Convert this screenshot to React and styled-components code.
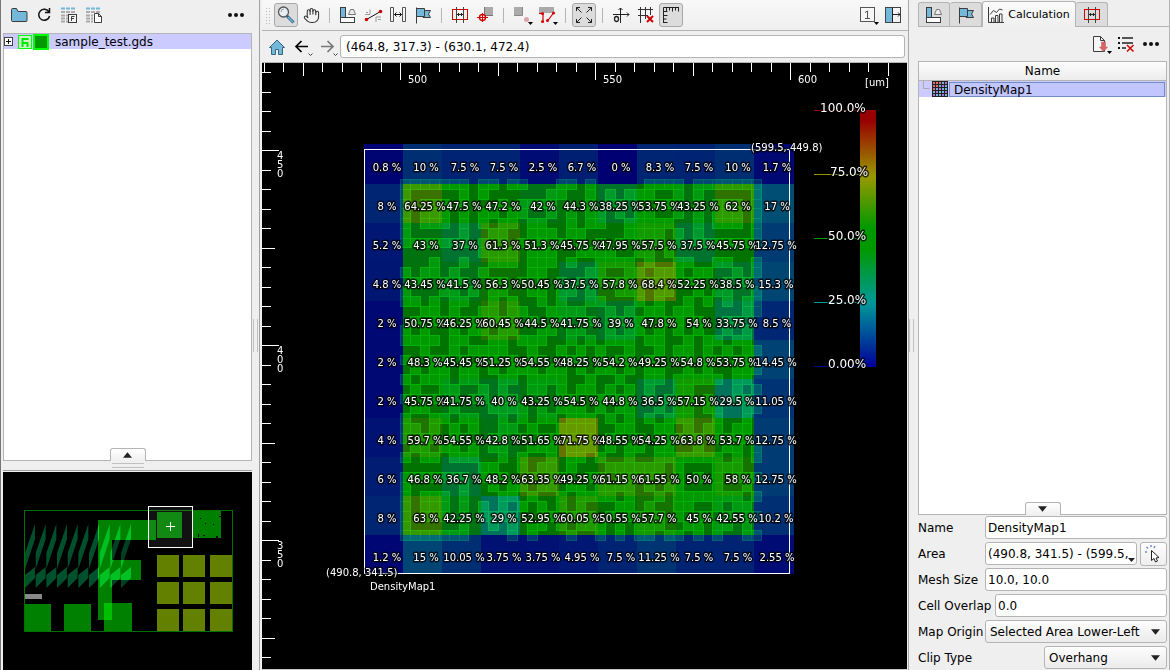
import React, { useState } from "react";
import styled, { createGlobalStyle } from "styled-components";
import { Hand } from "lucide-react";

const GlobalStyle = createGlobalStyle`
  * {
    box-sizing: border-box;
  }
  body {
    margin: 0;
    background: #efefef;
    color: #000;
    font-family: "DejaVu Sans", Verdana, sans-serif;
    font-size: 12px;
  }
  button, input, select {
    font: inherit;
    color: inherit;
  }
`;

const line = "#b4b4b4";
const ink = "#3c3c3c";
const blue = "#73b7d9";
const red = "#d40000";

const Shell = styled.div`
  display: flex;
  height: 100vh;
  border-left: 1px solid #777;
  border-right: 1px solid ${line};
  overflow: hidden;
`;

const LeftPane = styled.aside`
  display: flex;
  flex-direction: column;
  width: 251px;
  flex: none;
  padding-left: 2px;
`;

const CenterPane = styled.main`
  display: flex;
  flex-direction: column;
  flex: 1;
  min-width: 0;
  padding-left: 2px;
  border-left: 1px solid #a0a0a0;
  border-right: 1px solid #a8a8a8;
`;

const RightPane = styled.aside`
  display: flex;
  flex-direction: column;
  width: 255px;
  flex: none;
  padding: 2px 2px 0 4px;
`;

const Splitter = styled.div`
  display: flex;
  align-items: center;
  justify-content: center;
  flex: none;
  width: ${(p) => (p.$row ? "auto" : p.$width || "5px")};
  height: ${(p) => (p.$row ? "9px" : "auto")};

  &::after {
    content: "";
    width: ${(p) => (p.$row ? "32px" : "3px")};
    height: ${(p) => (p.$row ? "3px" : "33px")};
    border: solid #c0c0c0;
    border-width: ${(p) => (p.$row ? "1px 0" : "0 1px")};
  }
`;

const Toolbar = styled.div`
  display: flex;
  align-items: center;
  gap: 1px;
  flex: none;
  height: ${(p) => p.$height || "31px"};
  padding: ${(p) => p.$pad || "0 4px"};
  background: ${(p) => (p.$shaded ? "linear-gradient(#f8f8f8, #efefef)" : "none")};
  border-bottom: ${(p) => (p.$shaded ? `1px solid ${line}` : "none")};
`;

const ToolButton = styled.button`
  display: flex;
  align-items: center;
  justify-content: center;
  width: 24px;
  height: 24px;
  padding: 0;
  border: 1px solid ${(p) => (p.$on ? "#a8a8a8" : "transparent")};
  border-radius: 3px;
  background: ${(p) => (p.$on ? "#dcdcdc" : "none")};

  svg {
    flex: none;
  }
`;

const Separator = styled.span`
  width: 11px;
  height: 15px;
  background: linear-gradient(${line}, ${line}) center / 1px 100% no-repeat;
`;

const Grip = styled.span`
  width: 5px;
  height: 17px;
  margin-right: 3px;
  background: radial-gradient(circle, #bbb 1px, transparent 1px) 0 0 / 3px 3px;
`;

const Spacer = styled.span`
  flex: 1;
`;

const TreeBox = styled.section`
  position: relative;
  flex: 1;
  min-height: 0;
  background: #fff;
  border: 1px solid ${line};
`;

const FileRow = styled.div`
  display: flex;
  align-items: center;
  height: 15px;
  background: #cbcbff;

  span {
    line-height: 16px;
    margin-left: 5px;
    padding-top: 1px;
  }
`;

const CollapseTab = styled.button`
  position: absolute;
  bottom: -1px;
  left: 50%;
  width: 36px;
  height: 13px;
  padding: 0;
  transform: translateX(-50%);
  display: flex;
  align-items: center;
  justify-content: center;
  border: 1px solid ${line};
  border-bottom: none;
  border-radius: 3px 3px 0 0;
  background: linear-gradient(#fff, #efefef);
`;

const MiniMap = styled.div`
  flex: none;
  height: 200px;
  border-top: 1px solid #a0a0a0;
  padding-top: 1px;

  svg {
    display: block;
    width: 100%;
    height: 198px;
    background: #000;
    isolation: isolate;
  }
`;

const AddressBar = styled.form`
  display: flex;
  align-items: center;
  gap: 1px;
  flex: none;
  height: 31px;
  padding: 0 3px;
`;

const Field = styled.input`
  flex: 1;
  min-width: 0;
  width: 100%;
  height: 23px;
  padding: 0 2px;
  border: 1px solid ${line};
  border-radius: 3px;
  background: #fff;
  outline: none;
`;

const AddressField = styled(Field)`
  padding: 0 5px;
`;

const AreaField = styled(Field)`
  padding-right: 8px;
`;

const LayoutCanvas = styled.div`
  flex: 1;
  min-height: 0;
  border-top: 1px solid ${line};
  border-bottom: 1px solid #cfc8c8;
  margin-right: 1px;

  svg {
    display: block;
    width: 100%;
    height: 100%;
    background: #000;
    isolation: isolate;
  }
  text {
    fill: #fff;
    font-size: 10px;
  }
`;

const Lighten = styled.g`
  mix-blend-mode: plus-lighter;
`;

const HaloText = styled.g`
  text {
    paint-order: stroke;
    stroke: rgba(0, 0, 0, 0.75);
    stroke-width: 3px;
    stroke-linejoin: round;
    font-size: ${(p) => p.$size || "10px"};
  }
`;

const Tabs = styled.div`
  display: flex;
  align-items: flex-end;
  flex: none;
  height: 25px;
  margin-right: -2px;
  border-bottom: 1px solid ${line};
`;

const Tab = styled.button`
  display: flex;
  align-items: center;
  justify-content: center;
  gap: 4px;
  width: ${(p) => (p.$active ? "94px" : "32px")};
  height: ${(p) => (p.$active ? "26px" : "24px")};
  margin-bottom: ${(p) => (p.$active ? "-1px" : "0")};
  padding: 0;
  border: 1px solid ${line};
  border-bottom: none;
  border-left-width: ${(p) => (p.$first || p.$active ? "1px" : "0")};
  border-radius: 3px 3px 0 0;
  background: ${(p) => (p.$active ? "linear-gradient(#fcfcfc, #efefef)" : "#dcdcdc")};
  font-size: 11px;

  svg {
    flex: none;
  }
`;

const ListHeader = styled.div`
  height: 19px;
  line-height: 19px;
  text-align: center;
  background: linear-gradient(#fdfdfd, #ececec);
  border-bottom: 1px solid ${line};
`;

const ListRow = styled.div`
  display: flex;
  align-items: center;
  height: 16px;
  background: #cbcbff;

  span {
    flex: 1;
    height: 15px;
    line-height: 15px;
    margin-left: 1px;
    margin-right: 1px;
    padding-left: 4px;
    border: 1px solid #6f8fc0;
    background: #c1c6ff;
  }
`;

const Form = styled.form`
  display: grid;
  gap: 3px;
  flex: none;
  padding: 1px 0;
`;

const FormRow = styled.div`
  display: flex;
  align-items: center;
  gap: 3px;
  height: 23px;

  label {
    flex: none;
    width: ${(p) => p.$label || "64px"};
    white-space: nowrap;
  }
`;

const Combo = styled.div`
  position: relative;
  display: flex;
  flex: 1;
  min-width: 0;

  svg {
    position: absolute;
    right: 2px;
    bottom: 2px;
  }
`;

const PickButton = styled.button`
  display: flex;
  align-items: center;
  justify-content: center;
  width: 27px;
  height: 24px;
  padding: 0;
  border: 1px solid ${line};
  border-radius: 3px;
  background: linear-gradient(#fdfdfd, #efefef);
`;

const SelectWrap = styled.div`
  position: relative;
  flex: 1;

  svg {
    position: absolute;
    right: 7px;
    top: 9px;
    pointer-events: none;
  }
`;

const Select = styled.select`
  appearance: none;
  width: 100%;
  height: 23px;
  padding: 0 4px;
  border: 1px solid ${line};
  border-radius: 3px;
  background: linear-gradient(#fdfdfd, #ebebeb);
  outline: none;
`;

/* ---------- icons, drawn on a 24px button grid ---------- */

const Icon = ({ children, size = 24 }) => (
  <svg width={size} height={24} viewBox={`0 0 ${size} 24`} fill="none" stroke={ink} aria-hidden="true">
    {children}
  </svg>
);

const Caret = ({ x, y }) => <path d={`M${x} ${y}h5l-2.5 3z`} fill="#000" stroke="none" />;

const FolderIcon = () => (
  <Icon>
    <path d="M4.5 6.5q0-1 1-1h4l1.500 3h8q1 0 1 1v8q0 1-1 1h-13.500q-1 0-1-1z" fill={blue} />
  </Icon>
);

const ReloadIcon = () => (
  <Icon>
    <path d="M17 9a5.500 5.500 0 1 0 .6 4M17.500 5v4.500h-4.500" stroke="#111" strokeWidth="1.5" />
  </Icon>
);

const TableIcon = ({ kind }) => (
  <Icon>
    <path d="M4 5.500h15" stroke={blue} strokeWidth="2" strokeDasharray="4 1" />
    <path d="M4 9h15" stroke="#aaa" strokeWidth="2" strokeDasharray="4 1" />
    <path d="M4 12.500h7M4 15.500h7M4 18.500h7" stroke="#aaa" strokeWidth="2" strokeDasharray="4 1" />
    {kind === "F" ? (
      <g>
        <rect x="11.5" y="11.500" width="8" height="8" fill="#f3f3f3" />
        <path d="M14.500 18v-4.500h3M14.500 15.500h2.500" />
      </g>
    ) : (
      <path d="M12.500 10.500h4l3 3v6h-7zM16.500 10.500v3h3" fill="#fff" />
    )}
  </Icon>
);

const DotsIcon = () => (
  <Icon>
    <g fill="#111" stroke="none">
      <circle cx="6" cy="12" r="2" />
      <circle cx="12" cy="12" r="2" />
      <circle cx="18" cy="12" r="2" />
    </g>
  </Icon>
);

const SearchIcon = () => (
  <Icon size={22}>
    <path d="M12 13l6.500 6.500" stroke="#2c5f80" strokeWidth="3" />
    <path d="M13 14l5 5" stroke={blue} strokeWidth="1.5" />
    <circle cx="8.500" cy="9" r="5" fill="#e6eef2" stroke="#555" strokeWidth="1.3" />
    <path d="M6 9a3 3 0 0 1 3-3" stroke="#999" />
  </Icon>
);

const ShapesIcon = () => (
  <Icon>
    <rect x="4.500" y="4.500" width="5" height="10" fill={blue} />
    <rect x="4.500" y="14.500" width="14" height="5" fill="#fff" />
    <path d="M12.500 11.500l2-5h3l2 5z" stroke="#777" fill="#eee" />
  </Icon>
);

const PathIcon = () => (
  <Icon>
    <path d="M4 11.500h5v-5M15 19v-5h5M5 9.500h2M17 16.500h3" stroke="#999" />
    <path d="M5.500 16.500l14-8" stroke="#111" />
    <circle cx="5.500" cy="16.500" r="1.800" fill={red} stroke="none" />
    <circle cx="19.500" cy="8.500" r="1.800" fill={red} stroke="none" />
  </Icon>
);

const DistanceIcon = () => (
  <Icon>
    <path d="M4.500 4.500h3v14h-3zM16.500 4.500h3v14h-3z" stroke="#555" />
    <path d="M8.500 11.500h7M10.500 9.500l-2 2 2 2M13.500 9.500l2 2-2 2" stroke="#111" />
  </Icon>
);

const FlagIcon = () => (
  <Icon>
    <path d="M12 7.500h7.500l-2 3.500 2 3.500h-7.500z" fill={blue} />
    <path d="M5.500 5.500h8v8h-8z" fill={blue} />
    <path d="M5.500 4.500v16" />
  </Icon>
);

const RedRulerIcon = () => (
  <Icon>
    <rect x="4.500" y="6.500" width="15" height="10" stroke={red} />
    <path d="M8.500 4v16M15.500 4v16" stroke="#444" />
    <path d="M9 11.500h6M11 10l-1.500 1.500 1.500 1.500M13 10l1.500 1.500-1.500 1.500" stroke="#222" />
  </Icon>
);

const SnapIcon = () => (
  <Icon>
    <path d="M12 4h8v8h-8z" fill="#aaa" stroke="none" />
    <path d="M11.500 4v9M12 12.500h8" stroke="#777" />
    <circle cx="9.500" cy="14.500" r="3" stroke={red} fill="#fff" strokeWidth="1.4" />
    <path d="M4 14.500h11M9.500 10v9" stroke={red} />
  </Icon>
);

const PointIcon = () => (
  <Icon>
    <path d="M4 4h8v8h-8z" fill="#aaa" stroke="none" />
    <path d="M12.500 4v8.500H4" stroke="#888" />
    <circle cx="16.500" cy="16.500" r="2.500" fill="#d8a6a6" stroke="none" />
    <Caret x={18} y={19} />
  </Icon>
);

const VertexIcon = () => (
  <Icon>
    <path d="M4 4h15v6H4z" fill="#aaa" stroke="none" />
    <path d="M4 10.500h4v9M12.500 18l6-8" stroke={red} strokeWidth="1.200" />
    <g fill={red} stroke="none">
      <circle cx="7.500" cy="10.500" r="1.500" />
      <circle cx="7.500" cy="18.500" r="1.500" />
      <circle cx="12.500" cy="17.500" r="1.500" />
      <circle cx="18.500" cy="10" r="1.500" />
    </g>
    <Caret x={18} y={19} />
  </Icon>
);

const ExpandIcon = () => (
  <Icon size={22}>
    <path
      d="M8.500 9.500l-5-5M3.500 8v-3.500H7M13.500 9.500l5-5M15 4.500h3.500V8M8.500 14.500l-5 5M3.500 16v3.500H7M13.500 14.500l5 5M15 19.500h3.500V16"
      stroke="#222"
    />
  </Icon>
);

const OriginIcon = () => (
  <Icon>
    <path d="M4 11.500h16M11.500 20V5M18 9.500l2 2-2 2M9.500 7l2-2 2 2" stroke="#222" />
    <ellipse cx="7.500" cy="16" rx="2" ry="2.500" stroke="#222" strokeWidth="1.300" />
  </Icon>
);

const GridOffIcon = () => (
  <Icon>
    <path d="M4 6.500h15M4 12.500h10M6.500 4v16M11.500 4v12M16.500 4v8" stroke="#333" />
    <path d="M13 13l6 6M19 13l-6 6" stroke={red} strokeWidth="2" />
  </Icon>
);

const ScaleIcon = () => (
  <Icon size={22}>
    <path d="M3.500 20V4.500H19M6.500 4.500v4M9.500 4.500v3M12.500 4.500v4M15.500 4.500v3M18.500 4.500v4M3.500 8.500h4M3.500 12.500h4M3.500 16h3M3.500 19.500h4" stroke="#222" />
  </Icon>
);

const PageIcon = () => (
  <Icon>
    <rect x="4.500" y="4.500" width="14" height="14" fill="#f6f6f6" stroke="#555" />
    <path d="M9 9.500l2.500-1.500v7.500M9 15.500h5" stroke="#555" />
    <Caret x={18} y={19} />
  </Icon>
);

const SidePanelIcon = () => (
  <Icon>
    <rect x="4.500" y="4.500" width="15" height="15" stroke="#444" />
    <path d="M5 5h6v14H5z" fill={blue} stroke="none" />
    <path d="M11.500 4.500v15M12 11.500h7M17 9.500l2 2-2 2" stroke="#222" />
  </Icon>
);

const HomeIcon = () => (
  <Icon>
    <path d="M4.500 12.500l7.500-7.500 7.500 7.500h-2v7h-4v-5h-3v5h-4v-7z" fill={blue} stroke="#34647e" />
  </Icon>
);

const ArrowIcon = ({ back }) => (
  <Icon>
    {back ? (
      <path d="M18 11.500H6M11.500 6l-5.500 5.500 5.500 5.500" stroke="#000" strokeWidth="1.700" />
    ) : (
      <path d="M6 11.500h12M12.500 6l5.500 5.500-5.500 5.500" stroke="#777" strokeWidth="1.700" />
    )}
    <path d="M18.500 18.500l2 2 2-2" stroke="#444" />
  </Icon>
);

const ChartIcon = () => (
  <svg width="16" height="16" viewBox="0 0 16 16" fill="none" stroke={ink} aria-hidden="true">
    <path d="M.5 0v15.500H16M3.500 15v-4h2.500v4M7.500 15V8.500H10V15M11.500 15v-8H14v8M2 7.500l3.500-4 3 2 3-3.500 3 1" />
  </svg>
);

const ExportIcon = () => (
  <Icon>
    <path d="M4.500 4.500h7l4 4v11h-11zM11.500 4.500v4h4" fill="#f6f6f6" />
    <path d="M12.500 10h4v5h2l-4 4.500-4-4.500h2z" fill="#d96666" stroke="#b55" strokeWidth=".5" />
    <Caret x={18} y={19} />
  </Icon>
);

const ListOffIcon = () => (
  <Icon>
    <path d="M8 6h11M8 11h11M8 16h4" stroke="#222" strokeWidth="1.500" />
    <path d="M4 6h2M4 11h2M4 16h2" stroke="#111" strokeWidth="2" />
    <path d="M13 13l6.500 6.500M19.500 13l-6.500 6.500" stroke={red} strokeWidth="1.500" />
  </Icon>
);

const PickIcon = () => (
  <svg width="17" height="18" viewBox="0 0 17 18" fill="none" aria-hidden="true">
    <path d="M2 7H0M3 3.500L1.500 2M6 2V0M9 3l1-2" stroke="#6d8cc8" strokeWidth="1.500" />
    <path d="M6.500 5.500v10l2.500-2 1.500 3.500 2-1-1.500-3 3-.5z" fill="#fff" stroke="#222" />
  </svg>
);

const heatDots = ["#e07070", "#73b7d9", "#b070e0"];

const MapIcon = () => (
  <svg width="16" height="16" viewBox="0 0 16 16" aria-hidden="true">
    <rect width="16" height="16" fill="#222" />
    {Array.from({ length: 25 }, (_, i) => {
      const col = i % 5;
      const row = Math.floor(i / 5);
      const color = col + row < 3 ? heatDots[0] : (col + row) % 3 === 1 ? heatDots[2] : heatDots[1];
      return <rect key={i} x={1 + col * 3} y={1 + row * 3} width="2" height="2" fill={color} />;
    })}
  </svg>
);

const Triangle = ({ up, width = 9 }) => (
  <svg width={width} height="6" viewBox="0 0 10 6" aria-hidden="true">
    <path d={up ? "M0 6h10L5 0z" : "M0 0h10L5 6z"} fill="#222" />
  </svg>
);

/* ---------- density map ---------- */

const density = [
  [0.8, 10, 7.5, 7.5, 2.5, 6.7, 0, 8.3, 7.5, 10, 1.7],
  [8, 64.25, 47.5, 47.2, 42, 44.3, 38.25, 53.75, 43.25, 62, 17],
  [5.2, 43, 37, 61.3, 51.3, 45.75, 47.95, 57.5, 37.5, 45.75, 12.75],
  [4.8, 43.45, 41.5, 56.3, 50.45, 37.5, 57.8, 68.4, 52.25, 38.5, 15.3],
  [2, 50.75, 46.25, 60.45, 44.5, 41.75, 39, 47.8, 54, 33.75, 8.5],
  [2, 48.3, 45.45, 51.25, 54.55, 48.25, 54.2, 49.25, 54.8, 53.75, 14.45],
  [2, 45.75, 41.75, 40, 43.25, 54.5, 44.8, 36.5, 57.15, 29.5, 11.05],
  [4, 59.7, 54.55, 42.8, 51.65, 71.75, 48.55, 54.25, 63.8, 53.7, 12.75],
  [6, 46.8, 36.7, 48.2, 63.35, 49.25, 61.15, 61.55, 50, 58, 12.75],
  [8, 63, 42.25, 29, 52.95, 60.05, 50.55, 57.7, 45, 42.55, 10.2],
  [1.2, 15, 10.05, 3.75, 3.75, 4.95, 7.5, 11.25, 7.5, 7.5, 2.55],
];

// layout cells under the map, one string per row
const pattern = [
  "#######.##.##...##.#.....####.#######",
  "#.....#.#......##..#.#.###..#.#.....#",
  "#.###.#...#.####...#.##.#.###.#.###.#",
  "#.###.#.##.##..#.#.##.#.##..#.#.###.#",
  "#.###.#.#.##.##..#.##..#####..#.###.#",
  "#.....#..##..###.##....####.#.#.....#",
  "#######.#.#.#.#.#.#.#.#.#.#.#.#######",
  "........####.###..####..##.#.........",
  "...#..#..###.###.#..####.#..##..##..#",
  "#.##.#..#....##....##..##.###.##..#.#",
  ".##.###..##.#.#.#.#.####.##.###..#.#.",
  "#...##.#.##..##.##.#..###.##..#.##..#",
  "##.#.##..#.#..#.#..##...#.#..#.#.#.##",
  "..##.#..##.##..####..#.#.##.##.....##",
  ".#.##.##.###.#..#..#.##.#..##.#..##.",
  "#.#..#.##.##..##.##..#.##.#.#.#..#.#.",
  "####.##..##.###..#.#.###.##..#.##.##.",
  "..#..#.####..#..#.#.#..#..#.##.#.#.##",
  "#..##.#.##.#.##..##.#.##.#..##.##.##.",
  ".#.##.##.#.###.##.#.##.#.##..#.#..###",
  "#.###.##..##.####..#..#..##.#####.##.",
  ".#..##..#.#..##.#.##.#.#.#..##....#.#",
  "#.##.#.##.##..#.##..#.##.#.###.#..##.",
  ".##..#...####.#.###.#.##..#.##.##..##",
  "#..##.##..#.#.##.###.#.#.#.###..#..#.",
  "##.#.#.#..##.#..####..##..##.#.##.##.",
  "#.##.##..##.#.####.#.##.#.#####.####.",
  ".##.##.#.##..###.###.#.##.##..#..##.#",
  "#.##.###..#.#..#.##.#..#..#######.#.#",
  "........##..#.##.#...######.#...###..",
  "#######.#.#..#.##..##.#####.#.#.#.###",
  "#.....#..#.##.##.##.####.#.##...#..#.",
  "#.###.#...##.#..#.####.#..#.#######.#",
  "#.###.#.#.#.#.#.#.#...##.#..##..#.##.",
  "#.###.#.####..##.###.#.##.#.#.##.#.##",
  "#.....#..#.#.##.#.###.#.###..##.##.#.",
  "#######....#.#...#..#.#.##.##.#.#..##",
];

const stops = [
  [0, [0, 0, 1]],
  [25, [0, 1, 1]],
  [46, [0, 1, 0]],
  [54, [0, 1, 0]],
  [74, [1, 1, 0]],
  [96, [1, 0, 0]],
  [100, [1, 0, 0]],
];

const heat = (value, peak) => {
  const i = Math.max(1, stops.findIndex(([at]) => value <= at));
  const [a, from] = stops[i - 1];
  const [b, to] = stops[i];
  const t = (value - a) / (b - a);
  const rgb = from.map((c, k) => Math.round((c + (to[k] - c) * t) * peak));
  return `rgb(${rgb.join(",")})`;
};

const cellAt = (n) => Math.round(n * 9.76);

const PatternCells = () => (
  <Lighten transform="translate(400 179)">
    {pattern.map((row, r) =>
      [...row].map(
        (c, k) =>
          c === "#" && (
            <rect
              key={`${r}-${k}`}
              x={cellAt(k) + 0.5}
              y={cellAt(r) + 0.5}
              width={cellAt(k + 1) - cellAt(k)}
              height={cellAt(r + 1) - cellAt(r)}
              fill="#002600"
              stroke="#003e00"
            />
          )
      )
    )}
  </Lighten>
);

const tickLength = (k) => (k % 10 === 0 ? 17 : k % 5 === 0 ? 13 : 9);
const ticks = Array.from({ length: 60 }, (_, i) => i - 20);

const Rulers = () => (
  <g stroke="#fff">
    {ticks.map((k) => {
      const x = Math.round(400 + k * 19.5) + 0.5;
      const y = Math.round(150 + k * 19.5) + 0.5;
      return (
        <g key={k}>
          {x < 900 && <path d={`M${x} 63v${tickLength(k)}`} />}
          {y > 64 && <path d={`M262 ${y}h${tickLength(k)}`} />}
        </g>
      );
    })}
  </g>
);

const legend = [
  [100, "100.0%", 820, 110],
  [75, "75.0%", 830, 174],
  [50, "50.0%", 828, 238],
  [25, "25.0%", 828, 302],
  [0, "0.00%", 828, 366],
];

const DensityView = () => (
  <svg role="img" aria-label="Density map">
    <g transform="translate(-262 -63)">
      <rect x="262" y="63" width="100%" height="100%" fill="#000" />
      <g shapeRendering="crispEdges">
        {density.map((row, r) =>
          row.map((v, c) => (
            <rect
              key={`${r}-${c}`}
              x={364 + c * 39}
              y={r ? 145 + r * 39 : 144}
              width={c === 10 ? 40 : 39}
              height={r ? 39 : 40}
              fill={heat(v, 115)}
            />
          ))
        )}
      </g>
      <PatternCells />
      <rect x="364.5" y="149.5" width="425" height="424" fill="none" stroke="#fff" />
      <Rulers />
      <text x="408" y="83">500</text>
      <text x="603" y="83">550</text>
      <text x="798" y="83">600</text>
      <text x="865" y="86">[um]</text>
      {["450", "400", "350"].map((label, i) =>
        [...label].map((digit, k) => (
          <text key={`${label}-${k}`} x="277" y={159 + i * 195 + k * 9}>
            {digit}
          </text>
        ))
      )}
      <HaloText textAnchor="middle">
        {density.map((row, r) =>
          row.map((v, c) => (
            <text key={`${r}-${c}`} x={(v > 9.99 && v % 1 ? 386 : 387) + c * 39} y={171 + r * 39}>
              {v} %
            </text>
          ))
        )}
      </HaloText>
      <HaloText>
        <text x="751" y="151">(599.5, 449.8)</text>
        <text x="326" y="576">(490.8, 341.5)</text>
        <text x="370" y="590">DensityMap1</text>
      </HaloText>
      <defs>
        <linearGradient id="scale" x1="0" y1="1" x2="0" y2="0">
          {stops.map(([at]) => (
            <stop key={at} offset={`${at}%`} stopColor={heat(at, 153)} />
          ))}
        </linearGradient>
      </defs>
      <rect x="860" y="110" width="16" height="257" fill="url(#scale)" />
      <HaloText $size="12px">
        {legend.map(([at, label, x, y]) => (
          <g key={at}>
            <path d={`M814 ${y + 0.5}h46`} stroke={heat(at, 153)} />
            <text x={x} y={y + 2}>{label}</text>
          </g>
        ))}
      </HaloText>
    </g>
  </svg>
);

const Overview = () => (
  <svg role="img" aria-label="Layout overview">
    <g transform="translate(-3 -472)">
      <rect x="3" y="472" width="100%" height="100%" fill="#000" />
      <g fill="#648000" shapeRendering="crispEdges">
        {[555, 582, 609].map((y) => [157, 183, 210].map((x) => <rect key={`${x}-${y}`} x={x} y={y} width="22" height="22" />))}
      </g>
      <g fill="#008000" shapeRendering="crispEdges">
        <path d="M98 520h58v20h-44v20h29v20h-29v40h-14z" />
        <rect x="24" y="604" width="27" height="27" />
        <rect x="64" y="604" width="27" height="27" />
        <rect x="104" y="603" width="28" height="28" />
        <rect x="157" y="512" width="25" height="26" />
        <rect x="193" y="510" width="28" height="28" />
        <rect x="104" y="603" width="8" height="17" fill="#00be00" />
      </g>
      <Lighten>
        {Array.from({ length: 10 }, (_, k) => (
          <path
            key={k}
            transform={`translate(${25 + k * 10.67} 524)`}
            d="M10 0v15L0 45V29zM10 43v11L0 64V51z"
            fill={k > 6 ? "#004023" : "#00502d"}
          />
        ))}
      </Lighten>
      <path d="M200 518h1v1h-1zM205 523h1v1h-1zM213 524h1v1h-1zM219 516h2v1h-2zM198 534h1v3h-1zM203 535h2v1h-2zM216 536h2v2h-2z" fill="#000" />
      <rect x="25" y="594" width="17" height="5" fill="#888" />
      <rect x="24.5" y="510.5" width="208" height="121" fill="none" stroke="#007000" />
      <rect x="148.5" y="506.5" width="44" height="41" fill="rgba(255,255,255,0.07)" stroke="#fff" />
      <path d="M166 526.500h9M170.500 522v9" stroke="#fff" />
    </g>
  </svg>
);

const TreeMarks = () => (
  <svg width="46" height="16" viewBox="1 0 46 16" aria-hidden="true">
    <rect x="1.5" y="3.500" width="8" height="8" fill="#fff" stroke="#444" />
    <path d="M3 7.500h5M5.500 5v5" stroke="#111" />
    <rect x="15.5" y="1.500" width="13" height="13" fill="#ccf5cc" stroke="#00ff00" />
    <path d="M19.500 13V5h6M19.500 9h5v4" stroke="#00e800" strokeWidth="2" fill="none" />
    <rect x="31" y="1" width="14" height="14" fill="#009a00" stroke="#00ff00" strokeWidth="2" />
  </svg>
);

const Tool = ({ label, on, children }) => (
  <ToolButton type="button" aria-label={label} $on={on}>
    {children}
  </ToolButton>
);

const App = () => {
  const [address, setAddress] = useState("(464.8, 317.3) - (630.1, 472.4)");
  const [name, setName] = useState("DensityMap1");
  const [area, setArea] = useState("(490.8, 341.5) - (599.5, 449.8)");
  const [mesh, setMesh] = useState("10.0, 10.0");
  const [overlap, setOverlap] = useState("0.0");

  return (
    <>
      <GlobalStyle />
      <Shell>
        <LeftPane>
          <Toolbar $height="33px" $pad="0 4px 3px">
            <Tool label="Open"><FolderIcon /></Tool>
            <Tool label="Reload"><ReloadIcon /></Tool>
            <Tool label="Layer table"><TableIcon kind="F" /></Tool>
            <Tool label="File table"><TableIcon /></Tool>
            <Spacer />
            <Tool label="More"><DotsIcon /></Tool>
          </Toolbar>
          <TreeBox>
            <FileRow>
              <TreeMarks />
              <span>sample_test.gds</span>
            </FileRow>
            <CollapseTab type="button" aria-label="Show layers">
              <Triangle up />
            </CollapseTab>
          </TreeBox>
          <Splitter $row />
          <MiniMap>
            <Overview />
          </MiniMap>
        </LeftPane>
        <Splitter $width="7px" />

        <CenterPane>
          <Toolbar $shaded $pad="0 3px">
            <Grip />
            <Tool label="Zoom" on><SearchIcon /></Tool>
            <Tool label="Pan"><Hand size={17} strokeWidth={1.5} color="#333" /></Tool>
            <Separator />
            <Tool label="Shapes"><ShapesIcon /></Tool>
            <Tool label="Path"><PathIcon /></Tool>
            <Tool label="Distance"><DistanceIcon /></Tool>
            <Tool label="Marker"><FlagIcon /></Tool>
            <Separator />
            <Tool label="Ruler"><RedRulerIcon /></Tool>
            <Tool label="Snap"><SnapIcon /></Tool>
            <Separator />
            <Tool label="Point"><PointIcon /></Tool>
            <Tool label="Vertex"><VertexIcon /></Tool>
            <Separator />
            <Tool label="Fit" on><ExpandIcon /></Tool>
            <Separator />
            <Tool label="Origin"><OriginIcon /></Tool>
            <Tool label="Grid"><GridOffIcon /></Tool>
            <Tool label="Scale" on><ScaleIcon /></Tool>
            <Spacer />
            <Tool label="Page"><PageIcon /></Tool>
            <Tool label="Side panel"><SidePanelIcon /></Tool>
          </Toolbar>
          <AddressBar onSubmit={(e) => e.preventDefault()}>
            <Tool label="Home"><HomeIcon /></Tool>
            <Tool label="Back"><ArrowIcon back /></Tool>
            <Tool label="Forward"><ArrowIcon /></Tool>
            <AddressField aria-label="View area" value={address} onChange={(e) => setAddress(e.target.value)} />
          </AddressBar>
          <LayoutCanvas>
            <DensityView />
          </LayoutCanvas>
        </CenterPane>
        <Splitter />

        <RightPane>
          <Tabs>
            <Tab type="button" aria-label="Shapes" $first><ShapesIcon /></Tab>
            <Tab type="button" aria-label="Markers"><FlagIcon /></Tab>
            <Tab type="button" $active>
              <ChartIcon />
              Calculation
            </Tab>
            <Tab type="button" aria-label="Rulers"><RedRulerIcon /></Tab>
          </Tabs>
          <Toolbar $height="34px" $pad="0 4px">
            <Spacer />
            <Tool label="Export"><ExportIcon /></Tool>
            <Tool label="Clear list"><ListOffIcon /></Tool>
            <Tool label="More"><DotsIcon /></Tool>
          </Toolbar>
          <TreeBox>
            <ListHeader>Name</ListHeader>
            <ListRow>
              <svg width="13" height="16" viewBox="0 0 13 16" fill="none" aria-hidden="true">
                <path d="M4.500 0v7.500h6" stroke="#aaa" />
              </svg>
              <MapIcon />
              <span>DensityMap1</span>
            </ListRow>
            <CollapseTab type="button" aria-label="Hide details">
              <Triangle />
            </CollapseTab>
          </TreeBox>
          <Form onSubmit={(e) => e.preventDefault()}>
            <FormRow>
              <label htmlFor="name">Name</label>
              <Field id="name" value={name} onChange={(e) => setName(e.target.value)} />
            </FormRow>
            <FormRow>
              <label htmlFor="area">Area</label>
              <Combo>
                <AreaField id="area" value={area} onChange={(e) => setArea(e.target.value)} />
                <Triangle width={7} />
              </Combo>
              <PickButton type="button" aria-label="Pick area">
                <PickIcon />
              </PickButton>
            </FormRow>
            <FormRow>
              <label htmlFor="mesh">Mesh Size</label>
              <Field id="mesh" value={mesh} onChange={(e) => setMesh(e.target.value)} />
            </FormRow>
            <FormRow $label="74px">
              <label htmlFor="overlap">Cell Overlap</label>
              <Field id="overlap" value={overlap} onChange={(e) => setOverlap(e.target.value)} />
            </FormRow>
            <FormRow>
              <label htmlFor="origin">Map Origin</label>
              <SelectWrap>
                <Select id="origin">
                  <option>Selected Area Lower-Left</option>
                </Select>
                <Triangle />
              </SelectWrap>
            </FormRow>
            <FormRow $label="123px">
              <label htmlFor="clip">Clip Type</label>
              <SelectWrap>
                <Select id="clip">
                  <option>Overhang</option>
                </Select>
                <Triangle />
              </SelectWrap>
            </FormRow>
          </Form>
        </RightPane>
      </Shell>
    </>
  );
};

export default App;
